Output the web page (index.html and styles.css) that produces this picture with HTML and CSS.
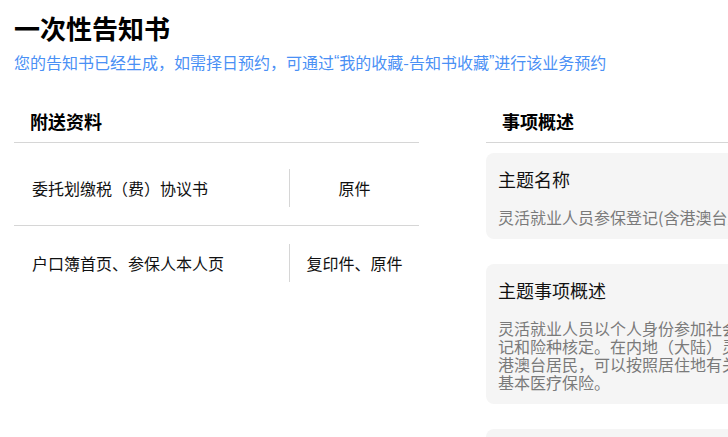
FILE: index.html
```html
<!DOCTYPE html>
<html lang="zh-CN">
<head>
    <meta charset="UTF-8">
    <meta name="viewport" content="width=device-width, initial-scale=1.0">
    <title>一次性告知书</title>
    <link rel="stylesheet" href="styles.css">
</head>
<body>
    <div class="page">
        <h1 class="title">一次性告知书</h1>
        <p class="tip">您的告知书已经生成，如需择日预约，可通过<span class="quote">“</span>我的收藏-告知书收藏<span class="quote">”</span>进行该业务预约</p>

        <div class="columns">
            <div class="col">
                <div class="col-head">附送资料</div>
                <div class="materials">
                    <div class="mat-row">
                        <div class="mat-name">委托划缴税（费）协议书</div>
                        <div class="mat-type">原件</div>
                    </div>
                    <div class="mat-row">
                        <div class="mat-name">户口簿首页、参保人本人页</div>
                        <div class="mat-type">复印件、原件</div>
                    </div>
                </div>
            </div>

            <div class="col">
                <div class="col-head">事项概述</div>
                <div class="card">
                    <div class="card-title">主题名称</div>
                    <div class="card-text">灵活就业人员参保登记(含港澳台居民)</div>
                </div>
                <div class="card">
                    <div class="card-title">主题事项概述</div>
                    <div class="card-text">灵活就业人员以个人身份参加社会保险，办理参保登记和险种核定。在内地（大陆）灵活就业并持证件的港澳台居民，可以按照居住地有关规定参加职工养老基本医疗保险。</div>
                </div>
                <div class="card">
                    <div class="card-title">办理对象</div>
                    <div class="card-text">灵活就业人员</div>
                </div>
            </div>
        </div>
    </div>
</body>
</html>
```

FILE: styles.css
```css
html, body {
    overflow: hidden;
}

body {
    margin: 0;
    font-family: "Noto Sans CJK SC", "Noto Sans", sans-serif;
    color: #222;
    background: #fff;
}

.page {
    padding: 10px 14px;
}

.title {
    margin: 0;
    font-size: 26px;
    line-height: 36px;
    font-weight: bold;
    color: #000;
}

.tip {
    margin: 5px 0 0;
    font-size: 16px;
    line-height: 22px;
    color: #4a90f5;
    white-space: nowrap;
}

/* narrow latin quotes like the original */
.quote {
    font-family: "Liberation Sans", sans-serif;
    vertical-align: top;
}

.columns {
    display: flex;
    gap: 67px;
    margin-top: 26px;
}

.col {
    flex: 0 0 405px;
    width: 405px;
}

.col-head {
    padding: 10px 16px 9px;
    font-size: 18px;
    line-height: 24px;
    font-weight: bold;
    color: #000;
    border-bottom: 1px solid #d6d6d6;
}

.materials {
    padding-top: 8px;
}

.mat-row {
    display: grid;
    grid-template-columns: 1fr 130px;
    padding: 18px 0;
    border-bottom: 1px solid #d6d6d6;
    font-size: 16px;
    line-height: 38px;
    color: #111;
}

.mat-row:last-child {
    border-bottom: none;
}

.mat-name {
    padding-left: 18px;
}

.mat-type {
    text-align: center;
    border-left: 1px solid #d6d6d6;
}

.card {
    margin-top: 10px;
    padding: 14px 12px 13px;
    background: #f5f5f5;
    border-radius: 8px;
}

.card + .card {
    margin-top: 25px;
}

.card-title {
    font-size: 18px;
    line-height: 24px;
    color: #111;
}

.card-text {
    margin-top: 17px;
    font-size: 16px;
    line-height: 18px;
    color: #7a7a7a;
}
```
